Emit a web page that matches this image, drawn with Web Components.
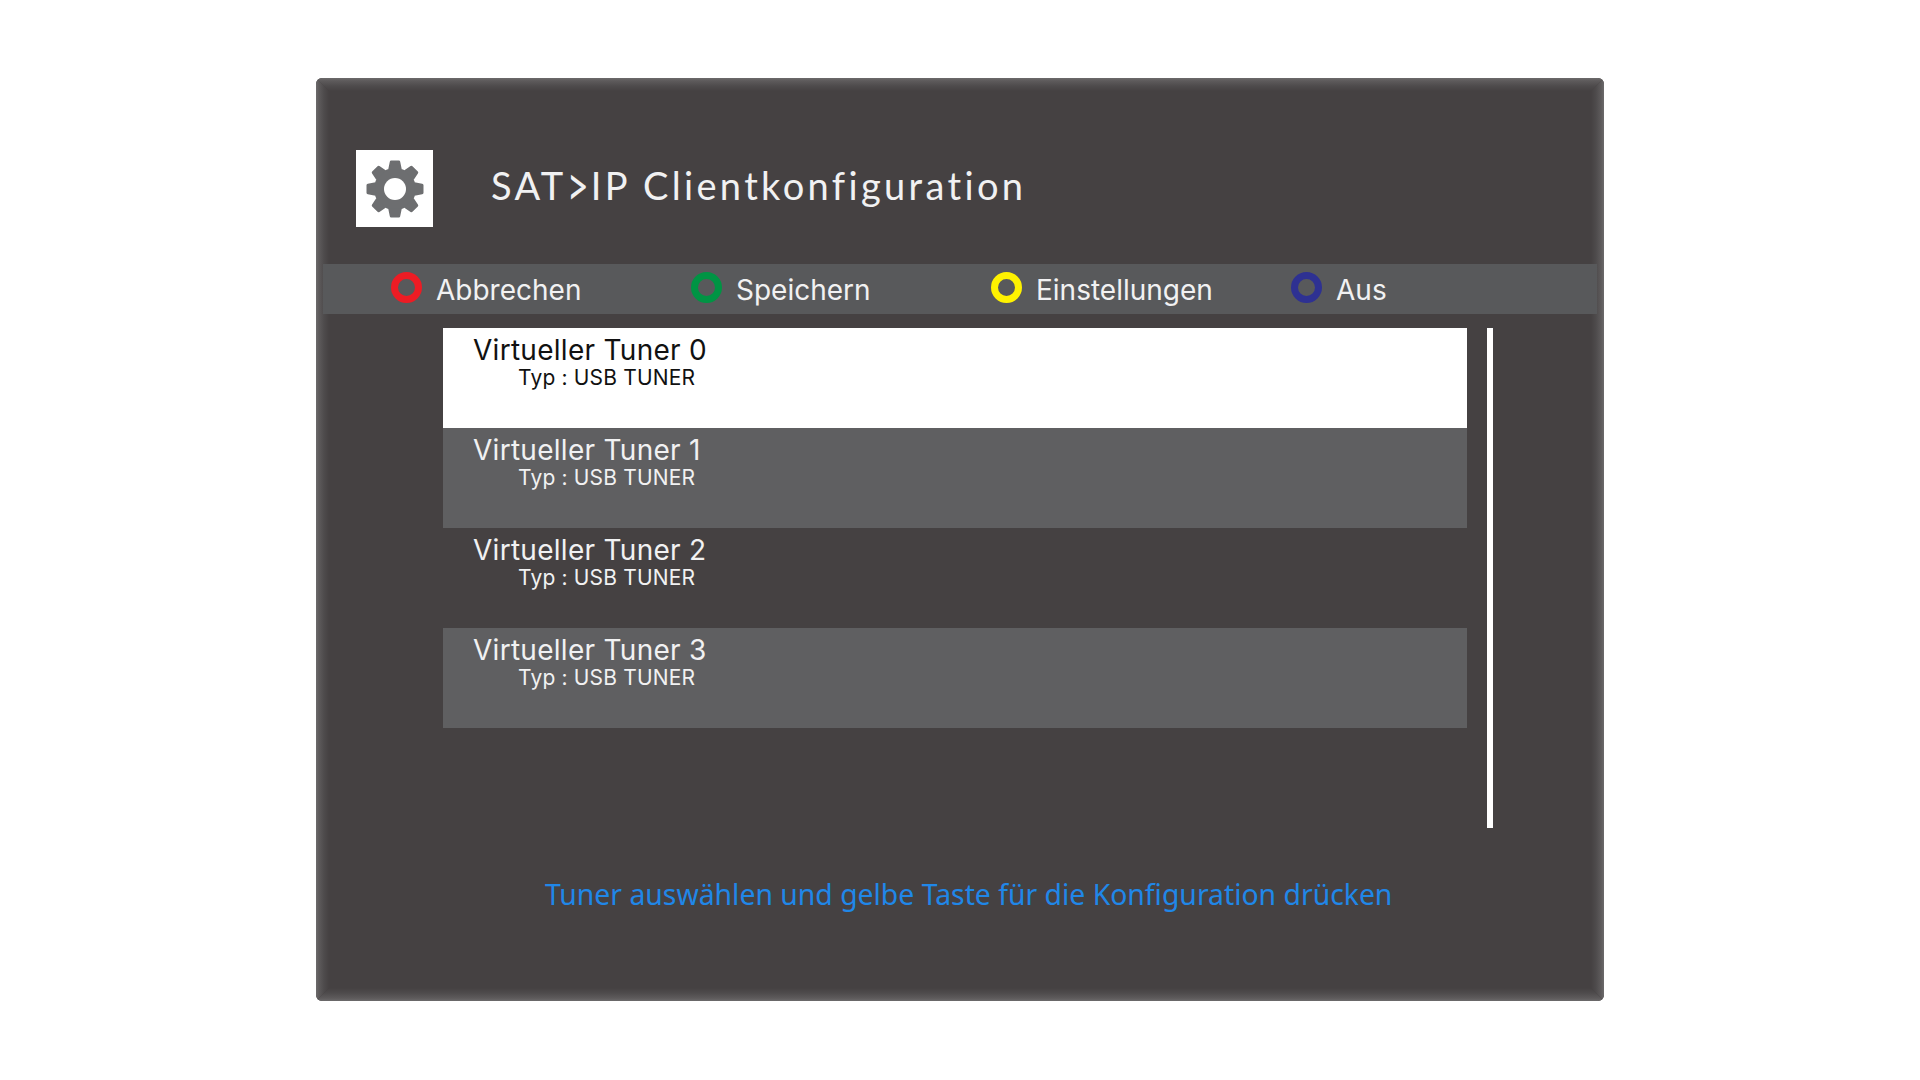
<!DOCTYPE html>
<html lang="de"><head><meta charset="utf-8"><title>SAT>IP Clientkonfiguration</title>
<style>
html,body{margin:0;background:#fff;height:100%;overflow:hidden}
body{font-family:"Inter","Noto Sans",sans-serif}
</style></head><body>
<tv-panel>
  <tv-header title-text="SAT&gt;IP Clientkonfiguration"></tv-header>
  <tv-keybar>
    <tv-key color="#ed1c24">Abbrechen</tv-key>
    <tv-key color="#009444">Speichern</tv-key>
    <tv-key color="#fff200">Einstellungen</tv-key>
    <tv-key color="#2e3192">Aus</tv-key>
  </tv-keybar>
  <tv-list>
    <tv-row state="selected" name="Virtueller Tuner 0" type="Typ : USB TUNER"></tv-row>
    <tv-row state="alt" name="Virtueller Tuner 1" type="Typ : USB TUNER"></tv-row>
    <tv-row name="Virtueller Tuner 2" type="Typ : USB TUNER"></tv-row>
    <tv-row state="alt" name="Virtueller Tuner 3" type="Typ : USB TUNER"></tv-row>
  </tv-list>
  <tv-hint>Tuner auswählen und gelbe Taste für die Konfiguration drücken</tv-hint>
</tv-panel>
<script>
function def(name,html,setup){
  customElements.define(name,class extends HTMLElement{
    constructor(){super();this.attachShadow({mode:'open'}).innerHTML=html;}
    connectedCallback(){if(setup)setup(this,this.shadowRoot);}
  });
}
const G='#6c6a6b 0,#5d5a5b 3px,#4e4b4c 8px,#454142 13px';
const tooth=[0,45,90,135,180,225,270,315].map(a=>`<path d="M-6.8-19.5L-5.2-27.2Q-5-28.5-3.8-28.5H3.8Q5-28.5 5.2-27.2L6.8-19.5Z" transform="rotate(${a})"/>`).join('');
def('tv-panel',`<style>
:host{display:block;box-sizing:border-box;width:1288px;height:923px;margin:78px 0 0 316px;background:#454142;border-radius:6px;overflow:hidden;position:relative}
.v,.h,.r{position:absolute;inset:0;pointer-events:none}
.v{background:linear-gradient(to bottom,${G}) top/100% 13px no-repeat,linear-gradient(to top,${G}) bottom/100% 13px no-repeat;clip-path:polygon(0 0,100% 0,calc(100% - 13px) 13px,13px 13px,13px calc(100% - 13px),calc(100% - 13px) calc(100% - 13px),100% 100%,0 100%,13px calc(100% - 13px),13px 13px)}
.h{background:linear-gradient(to right,${G}) left/13px 100% no-repeat;clip-path:polygon(0 0,13px 13px,13px calc(100% - 13px),0 100%)}
.r{background:linear-gradient(to left,${G}) right/13px 100% no-repeat;clip-path:polygon(100% 0,100% 100%,calc(100% - 13px) calc(100% - 13px),calc(100% - 13px) 13px)}
.c{position:relative}
</style><div class="v"></div><div class="h"></div><div class="r"></div><div class="c"><slot></slot></div>`);
def('tv-header',`<style>
:host{display:flex;align-items:flex-start;height:186px;padding:72px 0 0 40px;box-sizing:border-box}
.box{width:77px;height:77px;background:#fff;display:flex;align-items:center;justify-content:center;flex:none}
h1{margin:16px 0 0 58px;font:400 38px/1 "Lato",sans-serif;letter-spacing:3.35px;color:#f1f1f2}
h1 span{display:inline-block;transform:scaleY(1.5);transform-origin:50% 60%;letter-spacing:2px}
</style>
<div class="box"><svg width="60" height="60" viewBox="-30 -30 60 60" fill="#6d6e70">
<circle r="21"/>${tooth}<circle r="11" fill="#fff"/></svg></div><h1></h1>`,
(el,s)=>{const h=s.querySelector('h1');const [a,b]=el.getAttribute('title-text').split('>');
h.append(a);const m=document.createElement('span');m.textContent='>';h.append(m,b);});
def('tv-keybar',`<style>
:host{display:grid;grid-template-columns:repeat(4,300px);align-items:center;height:50px;margin:0 7px;padding-left:68px;background:#58595b}
</style><slot></slot>`);
def('tv-key',`<style>
:host{display:flex;align-items:center;gap:14px;font:400 28px/1 "Inter",sans-serif;color:#f1f1f2}
i{box-sizing:border-box;width:31px;height:31px;border-radius:50%;border:7.5px solid var(--c);flex:none;margin-top:-4px}
span{margin-top:1px}
</style><i></i><span><slot></slot></span>`,
(el,s)=>{s.querySelector('i').style.setProperty('--c',el.getAttribute('color'));});
def('tv-list',`<style>
:host{display:flex;gap:20px;height:500px;margin-top:14px;padding-left:127px}
.rows{width:1024px;display:flex;flex-direction:column}
.bar{width:6px;background:#fff}
</style><div class="rows"><slot></slot></div><div class="bar"></div>`);
def('tv-row',`<style>
:host{display:block;box-sizing:border-box;height:100px;padding:5px 0 0 30px;color:#f1f1f2;background:transparent}
:host([state=alt]){background:#5f5f61}
:host([state=selected]){background:#fff;color:#111}
.n{font:400 28px/34px "Inter",sans-serif;letter-spacing:.28px}
.t{font:400 21px/22px "Inter",sans-serif;letter-spacing:.17px;margin:0 0 0 45px}
</style><div class="n"></div><div class="t"></div>`,
(el,s)=>{s.querySelector('.n').textContent=el.getAttribute('name');s.querySelector('.t').textContent=el.getAttribute('type');});
def('tv-hint',`<style>
:host{display:block;margin:48px 0 0 229px;font:400 28.35px/36px "Noto Sans",sans-serif;color:#2087e8}
</style><slot></slot>`);
</script></body></html>
